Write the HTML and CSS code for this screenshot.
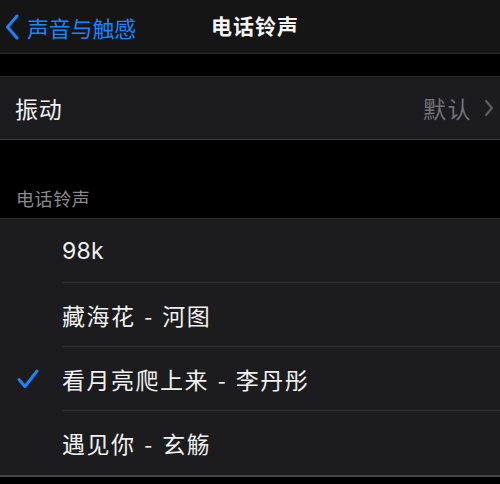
FILE: index.html
```html
<!DOCTYPE html>
<html lang="zh">
<head>
<meta charset="utf-8">
<link rel="stylesheet" href="styles.css">
</head>
<body>
<div class="screen">
  <header class="nav">
    <div class="back">
      <svg class="back-icon" width="14" height="26" viewBox="0 0 14 26"><path d="M12 2 L2.5 13 L12 24" fill="none" stroke="#1a84ff" stroke-width="3" stroke-linecap="round" stroke-linejoin="round"/></svg>
      <span class="back-text">声音与触感</span>
    </div>
    <div class="title">电话铃声</div>
  </header>
  <div class="gap-top"></div>
  <section class="group">
    <div class="row vib">
      <span class="label">振动</span>
      <span class="value">默认</span>
      <svg class="chev" width="10" height="18" viewBox="0 0 10 18"><path d="M2 2 L8 9 L2 16" fill="none" stroke="#5e5e62" stroke-width="2.2" stroke-linecap="round" stroke-linejoin="round"/></svg>
    </div>
  </section>
  <div class="section-head">电话铃声</div>
  <section class="group list">
    <div class="item"><span class="check"></span><span class="name latin">98k</span></div>
    <div class="item"><span class="check"></span><span class="name">藏海花 - 河图</span></div>
    <div class="item"><span class="check"><svg width="24" height="22" viewBox="0 0 24 22"><path d="M3 11.5 L9 18.5 L21 3" fill="none" stroke="#1a84ff" stroke-width="3" stroke-linecap="round" stroke-linejoin="round"/></svg></span><span class="name">看月亮爬上来 - 李丹彤</span></div>
    <div class="item last"><span class="check"></span><span class="name">遇见你 - 玄觞</span></div>
  </section>
</div>
</body>
</html>
```
FILE: styles.css
```css
html, body {
  margin: 0;
  padding: 0;
  background: #000;
}
body {
  font-family: "Noto Sans CJK SC", "Noto Sans", sans-serif;
  color: #f2f2f2;
}
.screen {
  width: 500px;
  height: 484px;
  overflow: hidden;
  background: #000;
}
.nav {
  height: 53px;
  background: #151515;
  border-bottom: 1px solid #2a2a2a;
  display: flex;
  align-items: center;
  position: relative;
}
.back {
  display: flex;
  align-items: center;
  padding-left: 5px;
  gap: 8px;
}
.back-icon {
  display: block;
}
.back-text {
  color: #1a84ff;
  font-size: 22px;
  line-height: 1;
  letter-spacing: -0.2px;
}
.title {
  position: absolute;
  left: 0;
  right: 0;
  top: 12px;
  padding-left: 10px;
  text-align: center;
  font-size: 21px;
  line-height: 26px;
  letter-spacing: 1px;
  font-weight: 700;
  color: #f4f4f4;
  pointer-events: none;
}
.gap-top {
  height: 22px;
}
.group {
  background: #1c1c1e;
  border-top: 1px solid #2c2c2e;
  border-bottom: 1px solid #3a3a3c;
}
.row {
  height: 62px;
  display: flex;
  align-items: center;
  padding: 0 6px 0 15px;
}
.label {
  font-size: 23px;
  letter-spacing: 0.8px;
  flex: 1;
  color: #f0f0f0;
}
.value {
  font-size: 23px;
  letter-spacing: 1.5px;
  color: #727276;
  margin-right: 12px;
}
.chev {
  display: block;
}
.section-head {
  height: 78px;
  box-sizing: border-box;
  padding: 0 0 7px 16px;
  display: flex;
  align-items: flex-end;
  font-size: 18px;
  letter-spacing: 0.6px;
  color: #8a8a8e;
}
.item {
  height: 64px;
  display: flex;
  align-items: center;
}
.check {
  width: 62px;
  flex: none;
  display: flex;
  justify-content: center;
  padding-right: 6px;
  box-sizing: border-box;
}
.check svg {
  display: block;
}
.name {
  flex: 1;
  height: 100%;
  display: flex;
  align-items: center;
  font-size: 23px;
  letter-spacing: 1.5px;
  word-spacing: 2px;
  color: #f0f0f0;
  border-bottom: 1px solid #323234;
  box-sizing: border-box;
  white-space: pre;
}
.item.last .name {
  border-bottom: none;
}
.name.latin {
  font-family: "Inter", "Noto Sans", sans-serif;
  font-size: 23px;
  letter-spacing: 0.3px;
}
.list {
  border-bottom: 2px solid #444446;
}
```
